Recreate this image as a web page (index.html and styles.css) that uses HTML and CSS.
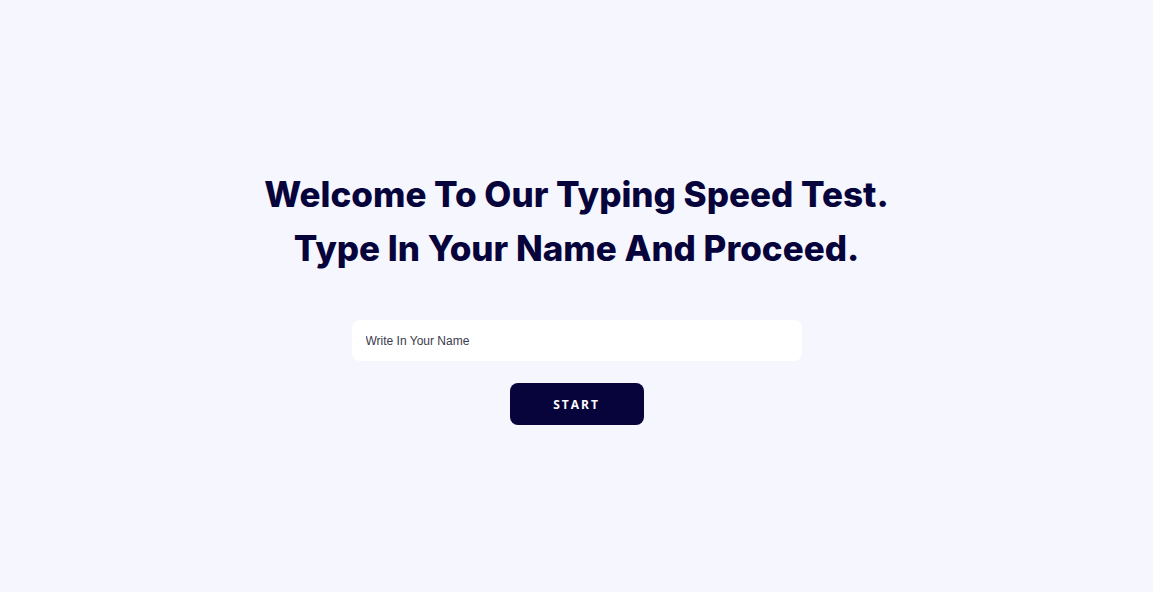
FILE: index.html
```html
<!DOCTYPE html>
<html lang="en">
<head>
<meta charset="utf-8">
<title>Typing Speed Test</title>
<link rel="stylesheet" href="styles.css">
</head>
<body>
<main class="page">
  <h1 class="title">Welcome To Our Typing Speed Test.<br>Type In Your Name And Proceed.</h1>
  <form class="form">
    <input class="name-input" type="text" placeholder="Write In Your Name">
    <button class="start-btn" type="button">START</button>
  </form>
</main>
</body>
</html>
```
FILE: styles.css
```css
html, body {
  margin: 0;
  padding: 0;
}
body {
  background: #f5f6fe;
  width: 1153px;
  height: 592px;
  overflow: hidden;
}
.page {
  display: flex;
  flex-direction: column;
  align-items: center;
  padding-top: 167px;
}
.title {
  margin: 0;
  font-family: Inter, "Noto Sans", sans-serif;
  font-weight: 800;
  font-size: 35px;
  line-height: 54px;
  color: #07043b;
  text-align: center;
  letter-spacing: 0;
}
.form {
  display: flex;
  flex-direction: column;
  align-items: center;
  margin-top: 45px;
  gap: 22px;
}
.name-input {
  box-sizing: border-box;
  width: 450px;
  height: 41px;
  border: none;
  border-radius: 8px;
  background: #ffffff;
  padding: 0 14px;
  font-family: "Liberation Sans", Arial, sans-serif;
  font-size: 12px;
  color: #333;
  outline: none;
}
.name-input::placeholder {
  color: #3a3a4a;
}
.start-btn {
  width: 134px;
  height: 42px;
  border: none;
  border-radius: 8px;
  background: #07043b;
  color: #ffffff;
  font-family: "Open Sans", sans-serif;
  font-weight: 700;
  font-size: 12px;
  letter-spacing: 2px;
  cursor: pointer;
}
```
